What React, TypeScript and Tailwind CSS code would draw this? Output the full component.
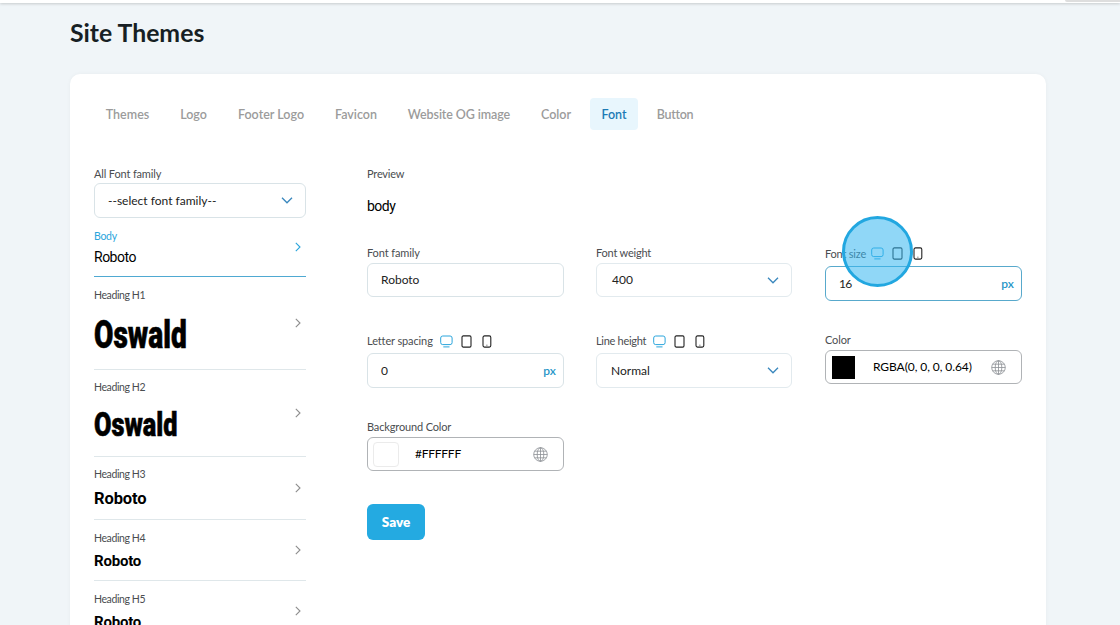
import { ReactNode } from 'react';
import clsx from 'clsx';

const tabs = [
  { name: 'Themes', width: 'w-[67px]' },
  { name: 'Logo', width: 'w-[51px]' },
  { name: 'Footer Logo', width: 'w-[90px]' },
  { name: 'Favicon', width: 'w-[66px]' },
  { name: 'Website OG image', width: 'w-[126px]' },
  { name: 'Color', width: 'w-[54px]' },
  { name: 'Font', width: 'w-[48px]' },
  { name: 'Button', width: 'w-[60px]' },
];

const oswald = 'font-[Roboto] font-black origin-left [-webkit-text-stroke:0.6px_black]';

const fonts = [
  { label: 'Body', family: 'Roboto', row: 'h-[59px] pt-[10px]', text: 'h-[26px] font-[Roboto] text-[14px] tracking-[-0.5px]' },
  { label: 'Heading H1', family: 'Oswald', row: 'h-[93px] pt-[10px]', text: `h-[64px] text-[38px] scale-x-[0.74] ${oswald}` },
  { label: 'Heading H2', family: 'Oswald', row: 'h-[87px] pt-[9px]', text: `h-[59px] text-[34px] scale-x-[0.745] ${oswald}` },
  { label: 'Heading H3', family: 'Roboto', row: 'h-[63px] pt-[9px]', text: 'h-[34px] font-[Roboto] font-bold text-[16.5px] tracking-[-0.1px]' },
  { label: 'Heading H4', family: 'Roboto', row: 'h-[61px] pt-[10px]', text: 'h-[30px] font-[Roboto] font-bold text-[15px] tracking-[-0.2px]' },
  { label: 'Heading H5', family: 'Roboto', row: 'h-[61px] pt-[10px]', text: 'h-[30px] font-[Roboto] font-bold text-[15px] tracking-[-0.2px]' },
];

function ChevronRight() {
  return (
    <svg width="6" height="10" viewBox="0 0 6 10" fill="none" stroke="currentColor" strokeWidth="1.1">
      <path d="M0.8 0.8 5 5 0.8 9.2" />
    </svg>
  );
}

function ChevronDown() {
  return (
    <svg width="12" height="7" viewBox="0 0 12 7" fill="none" stroke="#3987bd" strokeWidth="1.3">
      <path d="M1 0.8 6 5.8 11 0.8" />
    </svg>
  );
}

function Globe() {
  return (
    <svg width="15" height="15" viewBox="0 0 15 15" fill="none" stroke="#8b8f94" strokeWidth="0.8">
      <circle cx="7.5" cy="7.5" r="6.8" />
      <ellipse cx="7.5" cy="7.5" rx="3.3" ry="6.8" />
      <path d="M7.5 0.7v13.6M0.7 7.5h13.6M1.6 4.2h11.8M1.6 10.8h11.8" />
    </svg>
  );
}

function Devices() {
  return (
    <span className="-mt-[3px] flex items-center text-[#222]">
      <svg width="13" height="13" viewBox="0 0 13 13" fill="none" stroke="#2aa5dc" strokeWidth="1">
        <rect x="0.7" y="1" width="11.4" height="8.6" rx="2" />
        <path d="M3.3 11.9h6.2" />
      </svg>
      <svg className="ml-2" width="11" height="13" viewBox="0 0 11 13" fill="none" stroke="currentColor" strokeWidth="1.1">
        <rect x="1" y="0.9" width="9" height="11.2" rx="1.3" />
      </svg>
      <svg className="ml-[10px]" width="10" height="13" viewBox="0 0 10 13" fill="none" stroke="currentColor" strokeWidth="1.1">
        <rect x="1" y="0.9" width="7.8" height="11.2" rx="1.5" />
        <path d="M4.4 10.2h1" strokeWidth="0.8" />
      </svg>
    </span>
  );
}

interface FieldProps {
  label: string;
  labelClass?: string;
  devices?: boolean;
  boxClass: string;
  children: ReactNode;
}

function Field({ label, labelClass = '', devices, boxClass, children }: FieldProps) {
  return (
    <div>
      <div className="flex items-center">
        <span className={clsx('flex items-center whitespace-nowrap text-[11px] text-[#4a4d50]', labelClass)}>{label}</span>
        {devices && <Devices />}
      </div>
      <div className={clsx('flex items-center rounded-md border bg-white text-[12px] text-[#222]', boxClass)}>{children}</div>
    </div>
  );
}

export default function App() {
  return (
    <div className="h-[625px] overflow-hidden bg-[#f0f5f8] font-[Lato,sans-serif]">
      <header className="flex h-[3px] justify-end bg-white shadow-[0_1px_3px_rgba(0,0,0,0.18)]">
        <div className="h-[2px] w-[55px] rounded-bl bg-[#dedede]" />
      </header>

      <h1 className="ml-[70px] mt-[14px] h-8 text-[24.8px] font-bold leading-8 text-[#171f24]">Site Themes</h1>

      <main className="ml-[70px] mt-[25px] h-[600px] w-[976px] rounded-[10px] bg-white px-6 pt-6 shadow-[0_0_4px_rgba(0,0,0,0.04)]">
        <nav className="flex gap-[7px]">
          {tabs.map((tab) => (
            <button
              key={tab.name}
              className={clsx(
                'h-8 whitespace-nowrap rounded pt-[2px] text-center text-[12.5px] font-semibold',
                tab.width,
                tab.name === 'Font' ? 'bg-[#e8f6fd] text-[#1c7ab5]' : 'text-[#9b9b9b]',
                tab.name === 'Website OG image' && 'tracking-[-0.1px]',
                tab.name === 'Button' && 'tracking-[-0.3px]'
              )}
            >
              {tab.name}
            </button>
          ))}
        </nav>

        <div className="flex">
          <aside className="w-[212px] pt-[35px]">
            <Field label="All Font family" labelClass="h-[18px] tracking-[-0.15px]" boxClass="h-[35px] justify-between border-[#d9e3e7] pl-[13px] pr-3">
              <span>--select font family--</span>
              <ChevronDown />
            </Field>
            {fonts.map((font, i) => (
              <div
                key={font.label}
                className={clsx('flex border-b', font.row, i === 0 ? 'border-[#4fa9d2] text-[#2aa5dc]' : 'border-[#dfe7ea] text-[#4a4d50]')}
              >
                <div className="flex-1">
                  <div className={clsx('text-[10.5px] leading-4', i === 0 ? 'tracking-[-0.3px]' : 'tracking-[-0.4px]')}>{font.label}</div>
                  <div className={clsx('flex items-center text-black', font.text)}>{font.family}</div>
                </div>
                <div className={clsx('mr-[5px] mt-[-10px] flex items-center', i > 0 && 'text-[#8d8d8d]')}>
                  <ChevronRight />
                </div>
              </div>
            ))}
          </aside>

          <section className="ml-[61px] w-[655px] pt-9">
            <div className="text-[11px] leading-4 tracking-[-0.2px] text-[#4a4d50]">Preview</div>
            <div className="mt-3 h-6 font-[Roboto] text-[14px] leading-6 tracking-[-0.5px] text-black">body</div>

            <div className="mt-[26px] grid grid-cols-[197px_197px_197px] gap-x-8">
              <Field label="Font family" labelClass="h-[18px] mb-[1px] tracking-[-0.12px]" boxClass="h-[34px] border-[#d9e3e7] px-[13px]">
                Roboto
              </Field>
              <Field label="Font weight" labelClass="h-[18px] mb-[1px] tracking-[-0.2px]" boxClass="h-[34px] w-[196px] justify-between border-[#e2eaee] pl-[15px] pr-3">
                <span>400</span>
                <ChevronDown />
              </Field>
              <div className="relative">
                <Field label="Font size" labelClass="h-5 w-[46px] mb-[2px] tracking-[-0.2px]" devices boxClass="h-[35px] justify-between border-[#58a9cc] px-[13px] pr-[7px]">
                  <span className="tracking-[-0.8px]">16</span>
                  <span className="font-semibold text-[#2796c8]">px</span>
                </Field>
                <div className="absolute left-[17px] top-[-28px] h-[71px] w-[71px] rounded-full border-[3px] border-[#22a7e0] bg-[#35b6f0]/55" />
              </div>
            </div>

            <div className="mt-[31px] grid grid-cols-[197px_197px_197px] gap-x-8">
              <Field label="Letter spacing" labelClass="h-[18px] w-[73px] mb-[3px] tracking-[-0.12px]" devices boxClass="h-[35px] justify-between border-[#d9e3e7] pl-[13px] pr-[7px]">
                <span>0</span>
                <span className="font-semibold text-[#2796c8]">px</span>
              </Field>
              <Field label="Line height" labelClass="h-[18px] w-[57px] mb-[3px] tracking-[-0.3px]" devices boxClass="h-[35px] w-[196px] justify-between border-[#e2eaee] pl-[14px] pr-3">
                <span>Normal</span>
                <ChevronDown />
              </Field>
              <Field label="Color" labelClass="h-4 mb-[2px] tracking-[-0.12px]" boxClass="h-[34px] border-[#b0b3b6] pl-[6px] pr-[15px] text-black">
                <span className="h-[23px] w-[23px] bg-black" />
                <span className="ml-[18px] flex-1 tracking-[-0.08px]">RGBA(0, 0, 0, 0.64)</span>
                <Globe />
              </Field>
            </div>

            <div className="mt-[30px] w-[197px]">
              <Field label="Background Color" labelClass="h-[18px] mb-[1px] tracking-[-0.15px]" boxClass="h-[34px] border-[#b0b3b6] pl-[5px] pr-[15px] text-black">
                <span className="h-[25px] w-[26px] rounded-sm border border-[#ebebeb]" />
                <span className="ml-4 flex-1 tracking-[-0.25px]">#FFFFFF</span>
                <Globe />
              </Field>
            </div>

            <button className="mt-[33px] h-9 w-[58px] rounded-md bg-[#24aae1] text-[13.5px] font-extrabold text-white">Save</button>
          </section>
        </div>
      </main>
    </div>
  );
}
